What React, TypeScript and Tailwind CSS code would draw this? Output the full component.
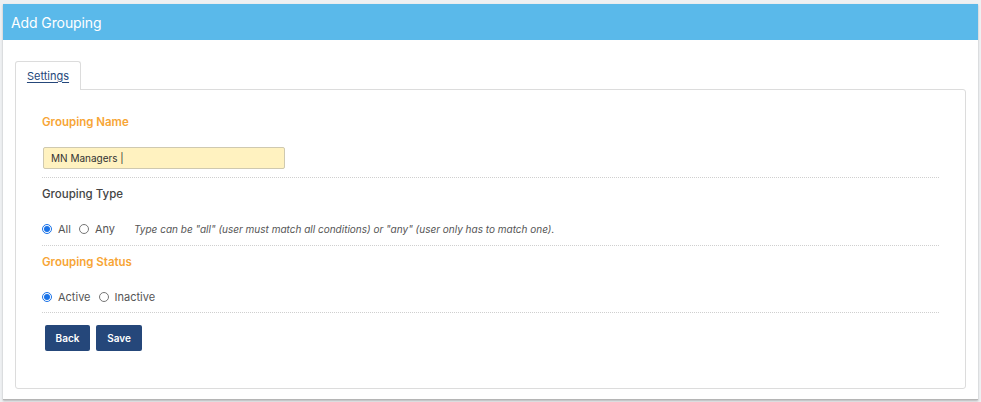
import React from "react";

function Radio({ checked, label }: { checked?: boolean; label: string }) {
  return (
    <span className="flex items-center">
      {checked ? (
        <span className="w-[10px] h-[10px] rounded-full border border-[#1a73e8] flex items-center justify-center">
          <span className="w-[6px] h-[6px] rounded-full bg-[#1a73e8]" />
        </span>
      ) : (
        <span className="w-[10px] h-[10px] rounded-full border border-[#767676] bg-white" />
      )}
      <span className="ml-[6px] text-[11px] text-[#555]">{label}</span>
    </span>
  );
}

export default function App() {
  return (
    <div className="w-[981px] h-[402px] bg-[#eef0f2] pt-[4px] px-[3px] overflow-hidden" style={{ fontFamily: "Inter, 'Noto Sans', sans-serif" }}>
      <div className="bg-white h-[396px] shadow-[0_1px_2px_rgba(0,0,0,0.25)] border-b border-[#b5b5b5] flex flex-col">
        <div className="h-[36px] bg-[#5ab9ea] flex items-center pl-[8px] shrink-0">
          <span className="text-white text-[14px] tracking-[-0.1px]">Add Grouping</span>
        </div>
        <div className="flex-1 px-[12px] pt-[21px] pb-[10px] flex flex-col">
          <div className="flex">
            <div className="w-[66px] h-[29px] border border-[#dcdcdc] border-b-0 rounded-t-[3px] bg-white flex items-center justify-center relative z-10 -mb-px">
              <span className="text-[11px] text-[#25477a] underline underline-offset-2">Settings</span>
            </div>
          </div>
          <div className="flex-1 border border-[#dcdcdc] rounded-b-[3px] rounded-tr-[3px] px-[26px] pt-[24px]">
            <div className="border-b border-dotted border-[#cfcfcf] pb-[8px]">
              <div className="text-[11.5px] font-semibold text-[#f7a535] leading-[16px]">Grouping Name</div>
              <div className="mt-[17px] w-[242px] h-[22px] ml-px bg-[#fff2c0] border border-[#cfc9b0] rounded-[2px] flex items-center pl-[7px]">
                <span className="text-[10px] text-[#333]">MN Managers |</span>
              </div>
            </div>
            <div className="border-b border-dotted border-[#cfcfcf] pt-[8px] pb-[8px]">
              <div className="text-[11.5px] font-medium text-[#444] leading-[16px]">Grouping Type</div>
              <div className="mt-[19px] flex items-center h-[16px]">
                <Radio checked label="All" />
                <span className="ml-[8px]"><Radio label="Any" /></span>
                <span className="ml-[19px] text-[10px] italic text-[#555]">
                  Type can be "all" (user must match all conditions) or "any" (user only has to match one).
                </span>
              </div>
            </div>
            <div className="border-b border-dotted border-[#cfcfcf] pt-[8px] pb-[7px]">
              <div className="text-[11.5px] font-semibold text-[#f7a535] leading-[16px]">Grouping Status</div>
              <div className="mt-[19px] flex items-center h-[16px]">
                <Radio checked label="Active" />
                <span className="ml-[8px]"><Radio label="Inactive" /></span>
              </div>
            </div>
            <div className="flex gap-[6px] mt-[12px] ml-[3px]">
              <button className="w-[45px] h-[26px] bg-[#25477a] rounded-[2px] text-white text-[10px] font-semibold">Back</button>
              <button className="w-[46px] h-[26px] bg-[#25477a] rounded-[2px] text-white text-[10px] font-semibold">Save</button>
            </div>
          </div>
        </div>
      </div>
    </div>
  );
}
